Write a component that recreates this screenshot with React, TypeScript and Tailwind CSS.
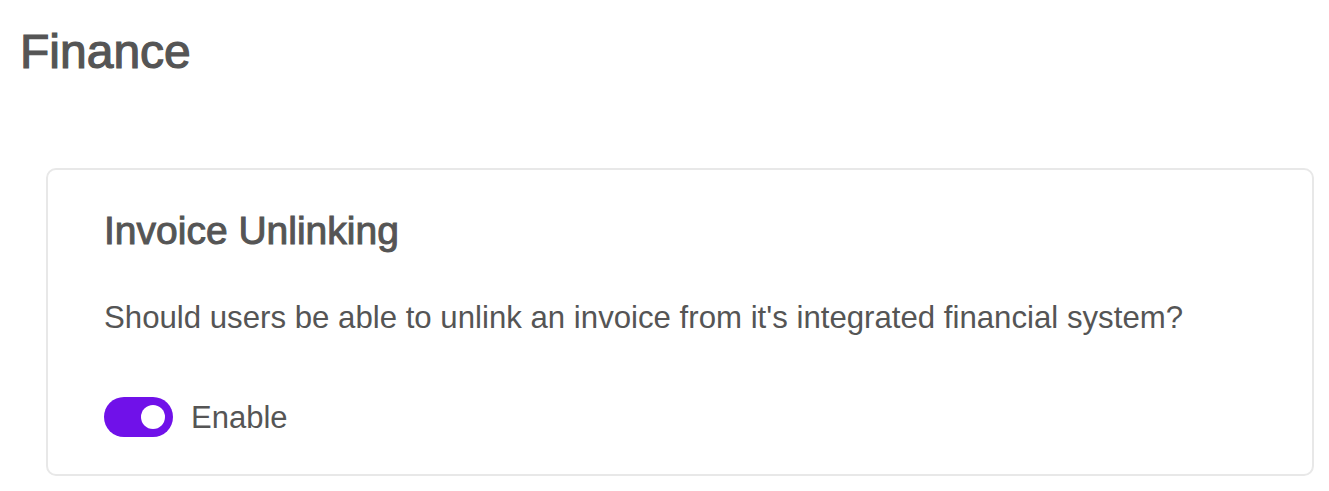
import React from "react";

export default function App() {
  return (
    <div className="min-h-[491px] bg-white text-[#555555] font-['Liberation_Sans',Arial,sans-serif] pl-[20px] pr-[15px] pt-[24px]">
      <h1 className="text-[48px] leading-[56px] font-normal [-webkit-text-stroke:1.2px_#555555]">Finance</h1>
      <div className="ml-[26px] mt-[88px] border-2 border-[#e8e8e8] rounded-[10px] pl-[56px] pr-[40px] pt-[38px] pb-[37px]">
        <h2 className="text-[39px] leading-[46px] font-normal [-webkit-text-stroke:1px_#555555]">Invoice Unlinking</h2>
        <p className="mt-[46px] text-[31.2px] leading-[36px]">
          Should users be able to unlink an invoice from it's integrated financial system?
        </p>
        <div className="mt-[61px] flex items-center gap-[18px]">
          <button
            type="button"
            role="switch"
            aria-checked="true"
            className="relative w-[69px] h-[40px] rounded-full bg-[#7011e9] flex items-center justify-end pr-[8px]"
          >
            <span className="block w-[24px] h-[24px] rounded-full bg-white" />
          </button>
          <span className="text-[31px] leading-[36px] pt-[2px]">Enable</span>
        </div>
      </div>
    </div>
  );
}
